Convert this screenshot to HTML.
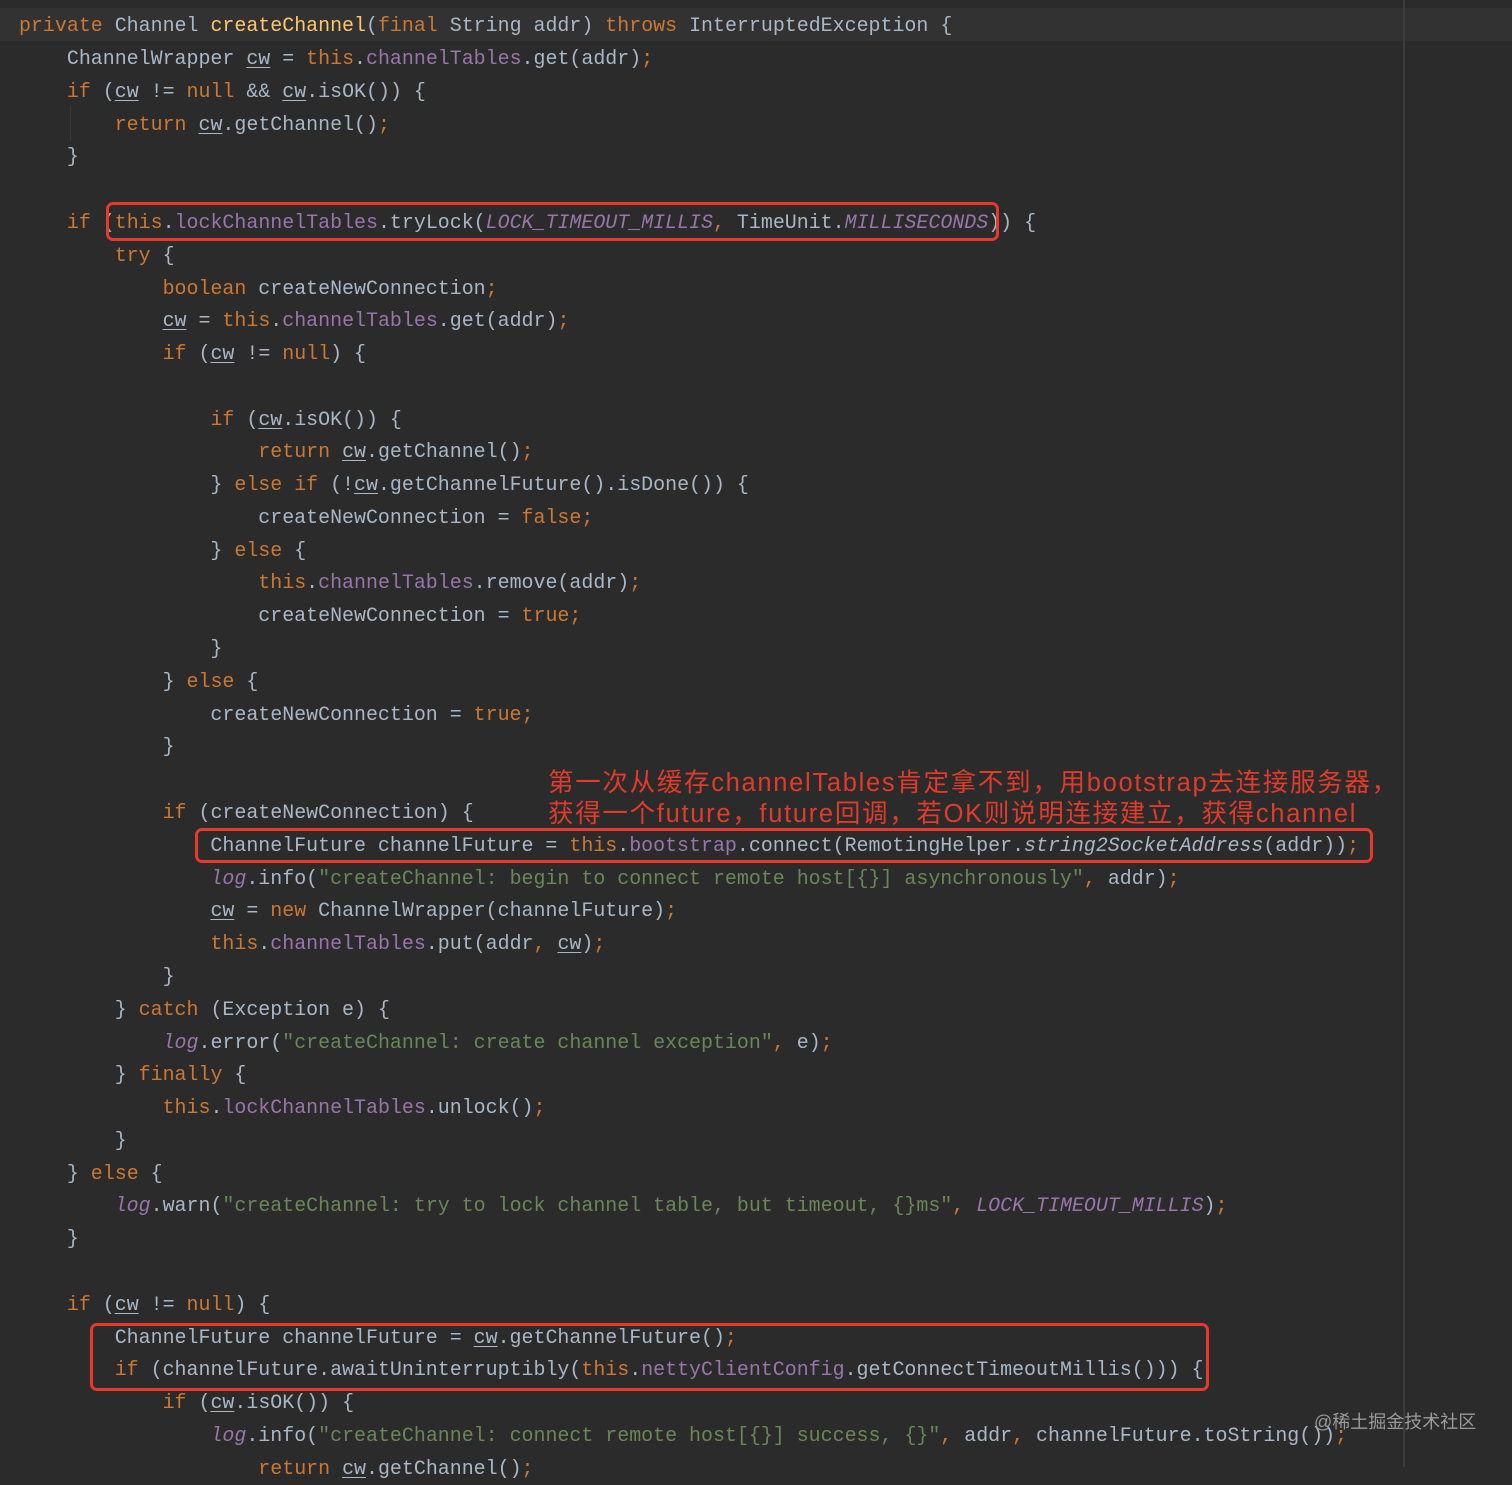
<!DOCTYPE html>
<html><head><meta charset="utf-8"><style>
html,body{margin:0;padding:0;}
body{width:1512px;height:1467px;background:#2b2b2b;position:relative;overflow:hidden;font-family:"Liberation Mono",monospace;font-size:19.95px;color:#a9b7c6;}
.l{position:absolute;left:19px;white-space:pre;height:33px;line-height:33px;}
.k{color:#cc7832}.f{color:#9876aa}.s{color:#6a8759}.m{color:#ffc66d}
.i{font-style:italic}.u{text-decoration:underline;text-underline-offset:3px}
.box{position:absolute;border:3px solid #e5392b;border-radius:7px;box-sizing:border-box;}
.note{position:absolute;left:548px;color:#e03b2b;font-family:"Liberation Sans","Noto Sans CJK SC",sans-serif;font-size:25.5px;letter-spacing:1.7px;white-space:pre;line-height:31px;}
</style></head><body>
<div style="position:absolute;left:0;top:8px;width:1512px;height:33px;background:#323232"></div>
<div style="position:absolute;left:1403px;top:0;width:2px;height:1467px;background:#3c3c3c"></div>
<div style="position:absolute;left:70px;top:105px;width:1px;height:36px;background:#3a3a3a"></div>
<div class="l" style="top:9px"><span class="k">private </span>Channel <span class="m">createChannel</span>(<span class="k">final </span>String addr) <span class="k">throws </span>InterruptedException {</div>
<div class="l" style="top:42px">    ChannelWrapper <span class="u">cw</span> = <span class="k">this</span>.<span class="f">channelTables</span>.get(addr)<span class="k">;</span></div>
<div class="l" style="top:75px">    <span class="k">if </span>(<span class="u">cw</span> != <span class="k">null </span>&amp;&amp; <span class="u">cw</span>.isOK()) {</div>
<div class="l" style="top:108px">        <span class="k">return </span><span class="u">cw</span>.getChannel()<span class="k">;</span></div>
<div class="l" style="top:140px">    }</div>
<div class="l" style="top:206px">    <span class="k">if </span>(<span class="k">this</span>.<span class="f">lockChannelTables</span>.tryLock(<span class="f i">LOCK_TIMEOUT_MILLIS</span><span class="k">, </span>TimeUnit.<span class="f i">MILLISECONDS</span>)) {</div>
<div class="l" style="top:239px">        <span class="k">try </span>{</div>
<div class="l" style="top:272px">            <span class="k">boolean </span>createNewConnection<span class="k">;</span></div>
<div class="l" style="top:304px">            <span class="u">cw</span> = <span class="k">this</span>.<span class="f">channelTables</span>.get(addr)<span class="k">;</span></div>
<div class="l" style="top:337px">            <span class="k">if </span>(<span class="u">cw</span> != <span class="k">null</span>) {</div>
<div class="l" style="top:403px">                <span class="k">if </span>(<span class="u">cw</span>.isOK()) {</div>
<div class="l" style="top:435px">                    <span class="k">return </span><span class="u">cw</span>.getChannel()<span class="k">;</span></div>
<div class="l" style="top:468px">                } <span class="k">else if </span>(!<span class="u">cw</span>.getChannelFuture().isDone()) {</div>
<div class="l" style="top:501px">                    createNewConnection = <span class="k">false;</span></div>
<div class="l" style="top:534px">                } <span class="k">else </span>{</div>
<div class="l" style="top:566px">                    <span class="k">this</span>.<span class="f">channelTables</span>.remove(addr)<span class="k">;</span></div>
<div class="l" style="top:599px">                    createNewConnection = <span class="k">true;</span></div>
<div class="l" style="top:632px">                }</div>
<div class="l" style="top:665px">            } <span class="k">else </span>{</div>
<div class="l" style="top:698px">                createNewConnection = <span class="k">true;</span></div>
<div class="l" style="top:730px">            }</div>
<div class="l" style="top:796px">            <span class="k">if </span>(createNewConnection) {</div>
<div class="l" style="top:829px">                ChannelFuture channelFuture = <span class="k">this</span>.<span class="f">bootstrap</span>.connect(RemotingHelper.<span class="i">string2SocketAddress</span>(addr))<span class="k">;</span></div>
<div class="l" style="top:862px">                <span class="f i">log</span>.info(<span class="s">"createChannel: begin to connect remote host[{}] asynchronously"</span><span class="k">, </span>addr)<span class="k">;</span></div>
<div class="l" style="top:894px">                <span class="u">cw</span> = <span class="k">new </span>ChannelWrapper(channelFuture)<span class="k">;</span></div>
<div class="l" style="top:927px">                <span class="k">this</span>.<span class="f">channelTables</span>.put(addr<span class="k">, </span><span class="u">cw</span>)<span class="k">;</span></div>
<div class="l" style="top:960px">            }</div>
<div class="l" style="top:993px">        } <span class="k">catch </span>(Exception e) {</div>
<div class="l" style="top:1026px">            <span class="f i">log</span>.error(<span class="s">"createChannel: create channel exception"</span><span class="k">, </span>e)<span class="k">;</span></div>
<div class="l" style="top:1058px">        } <span class="k">finally </span>{</div>
<div class="l" style="top:1091px">            <span class="k">this</span>.<span class="f">lockChannelTables</span>.unlock()<span class="k">;</span></div>
<div class="l" style="top:1124px">        }</div>
<div class="l" style="top:1157px">    } <span class="k">else </span>{</div>
<div class="l" style="top:1189px">        <span class="f i">log</span>.warn(<span class="s">"createChannel: try to lock channel table, but timeout, {}ms"</span><span class="k">, </span><span class="f i">LOCK_TIMEOUT_MILLIS</span>)<span class="k">;</span></div>
<div class="l" style="top:1222px">    }</div>
<div class="l" style="top:1288px">    <span class="k">if </span>(<span class="u">cw</span> != <span class="k">null</span>) {</div>
<div class="l" style="top:1321px">        ChannelFuture channelFuture = <span class="u">cw</span>.getChannelFuture()<span class="k">;</span></div>
<div class="l" style="top:1353px">        <span class="k">if </span>(channelFuture.awaitUninterruptibly(<span class="k">this</span>.<span class="f">nettyClientConfig</span>.getConnectTimeoutMillis())) {</div>
<div class="l" style="top:1386px">            <span class="k">if </span>(<span class="u">cw</span>.isOK()) {</div>
<div class="l" style="top:1419px">                <span class="f i">log</span>.info(<span class="s">"createChannel: connect remote host[{}] success, {}"</span><span class="k">, </span>addr<span class="k">, </span>channelFuture.toString())<span class="k">;</span></div>
<div class="l" style="top:1452px">                    <span class="k">return </span><span class="u">cw</span>.getChannel()<span class="k">;</span></div>
<div class="box" style="left:106px;top:202px;width:893px;height:39px"></div>
<div class="box" style="left:195px;top:828px;width:1178px;height:35px"></div>
<div class="box" style="left:90px;top:1323px;width:1119px;height:68px"></div>
<div class="note" style="top:768px">第一次从缓存channelTables肯定拿不到，用bootstrap去连接服务器，</div>
<div class="note" style="top:799px">获得一个future，future回调，若OK则说明连接建立，获得channel</div>
<div style="position:absolute;left:1314px;top:1408px;font-family:'Liberation Sans','Noto Sans CJK SC',sans-serif;font-size:18px;color:#9a9a9a;white-space:pre">@稀土掘金技术社区</div>
</body></html>
